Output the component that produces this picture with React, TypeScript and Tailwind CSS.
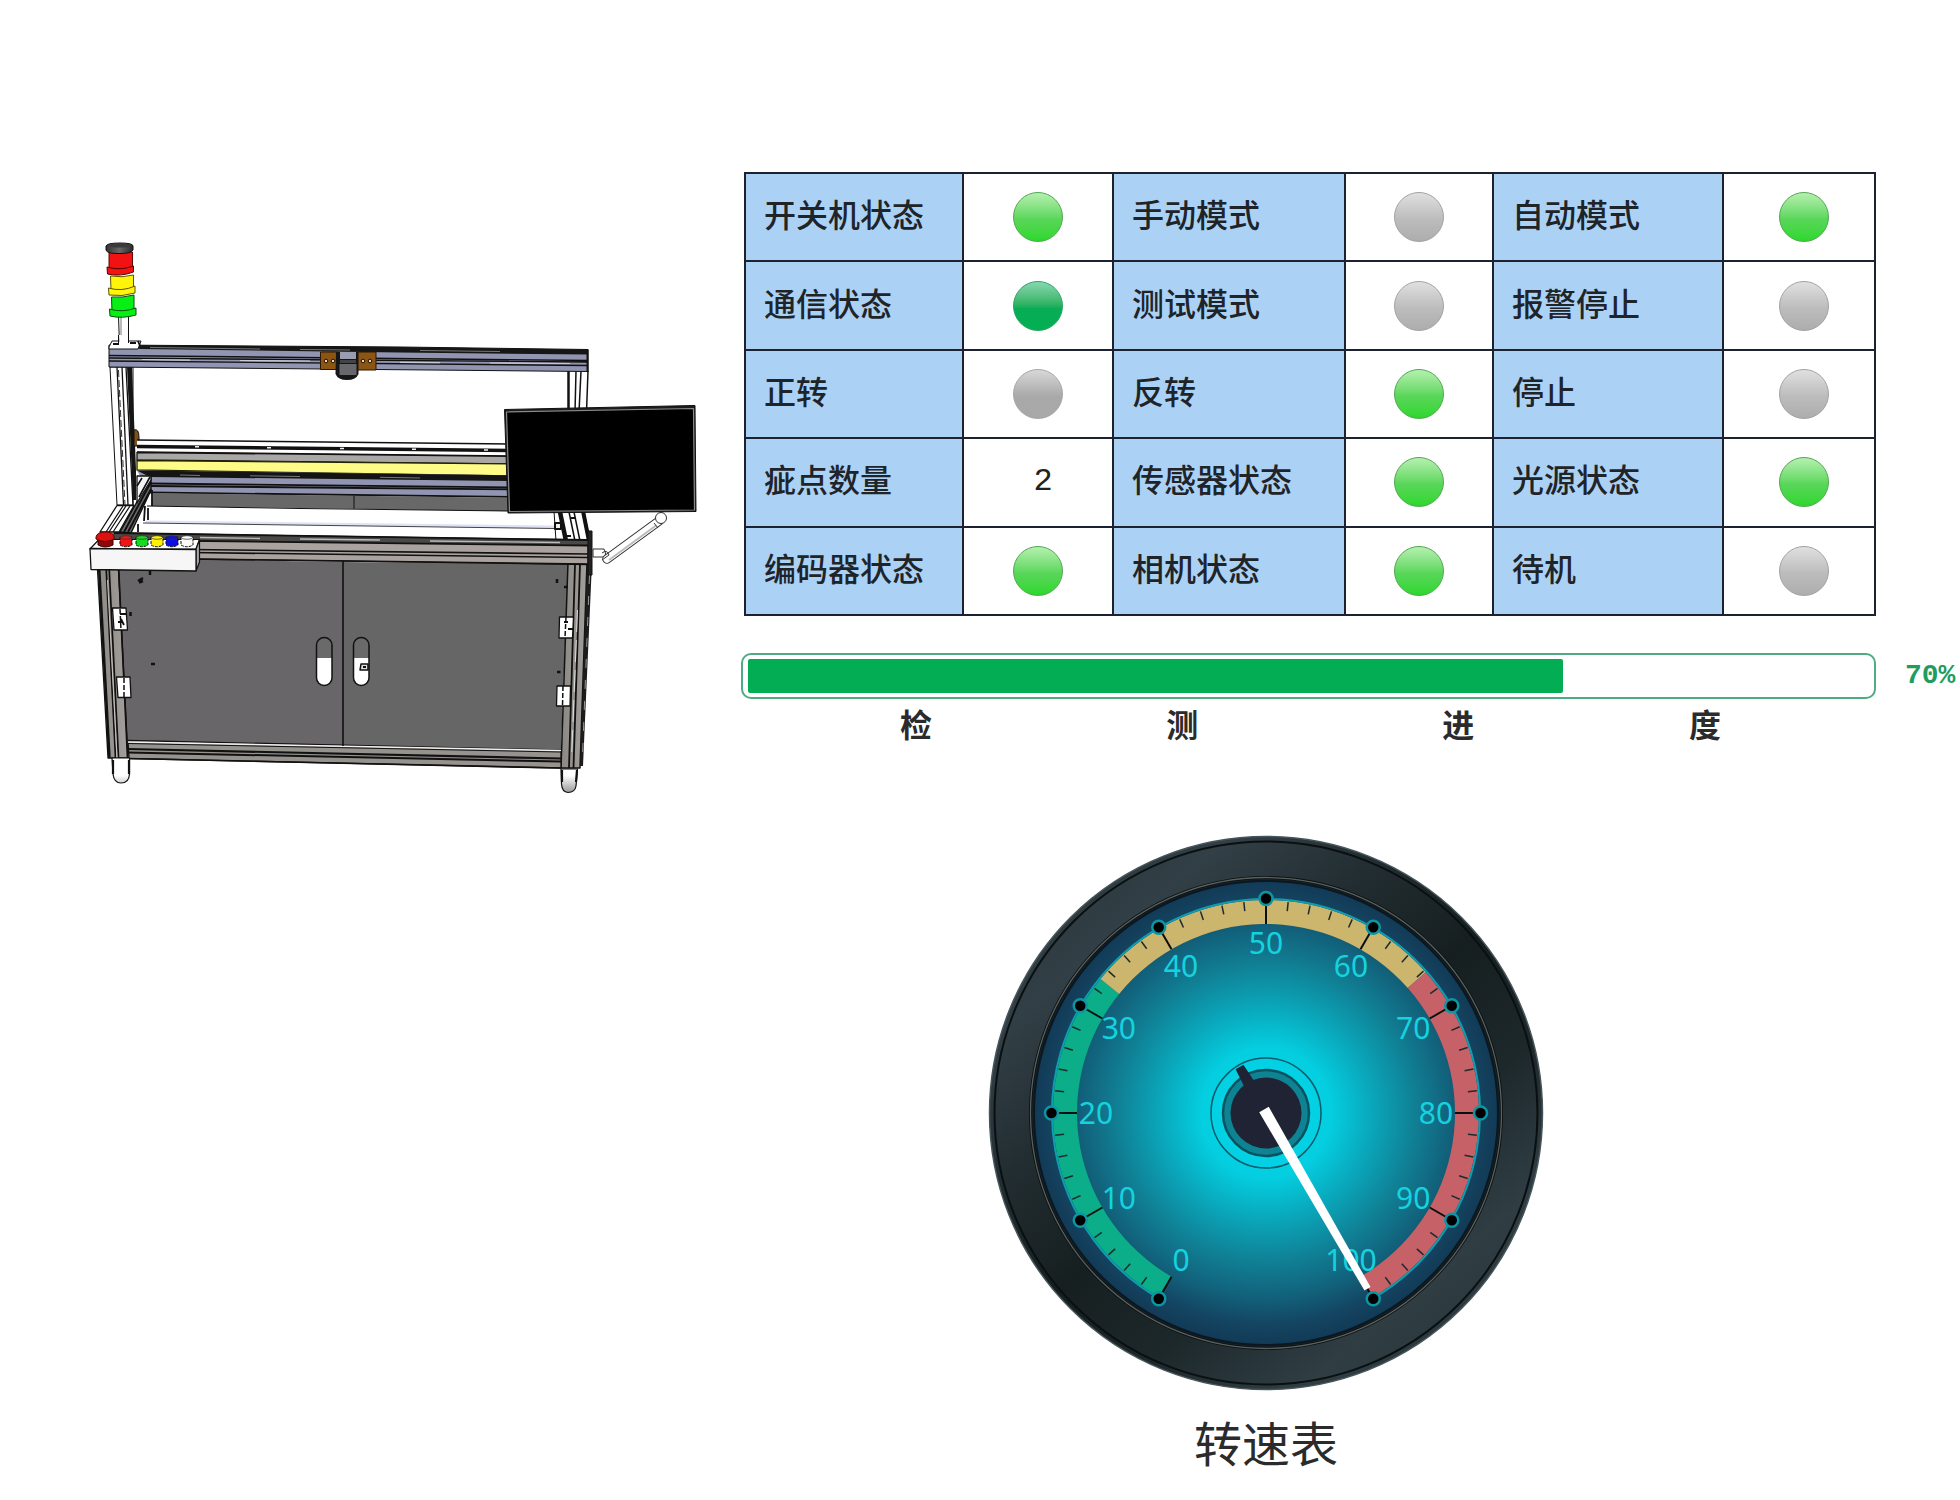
import React from 'react';

type Cell = { label: string; light?: Tone; value?: string };
type Tone = 'on' | 'link' | 'off' | 'idle';

const rows: Cell[][] = [
  [
    { label: '开关机状态', light: 'on' },
    { label: '手动模式', light: 'off' },
    { label: '自动模式', light: 'on' },
  ],
  [
    { label: '通信状态', light: 'link' },
    { label: '测试模式', light: 'off' },
    { label: '报警停止', light: 'off' },
  ],
  [
    { label: '正转', light: 'idle' },
    { label: '反转', light: 'on' },
    { label: '停止', light: 'off' },
  ],
  [
    { label: '疵点数量', value: '2' },
    { label: '传感器状态', light: 'on' },
    { label: '光源状态', light: 'on' },
  ],
  [
    { label: '编码器状态', light: 'on' },
    { label: '相机状态', light: 'on' },
    { label: '待机', light: 'off' },
  ],
];

const tones: Record<Tone, string> = {
  on: 'border-[#55a855] bg-linear-to-b from-[#b4f0b0] via-[#58d658] via-55% to-[#2ad82a]',
  link: 'border-[#2fa56a] bg-linear-to-b from-[#86d8b0] via-[#08ac54] via-55% to-[#00b052]',
  off: 'border-[#a4a4a4] bg-linear-to-b from-[#e0e0e0] via-[#bcbcbc] via-55% to-[#adadad]',
  idle: 'border-[#a8a8a8] bg-linear-to-b from-[#d8d8d8] via-[#a9a9a9] via-55% to-[#a8a8a8]',
};

function Light({ tone }: { tone: Tone }) {
  return (
    <span
      role="img"
      aria-label={tone === 'on' || tone === 'link' ? '开' : '关'}
      className={`mx-auto block size-[50px] rounded-full border ${tones[tone]}`}
    />
  );
}

function StatusTable() {
  return (
    <table className="h-[444px] w-full table-fixed border-collapse border-2 border-[#1c2230]">
      <colgroup>
        <col className="w-[109px]" />
        <col className="w-[75px]" />
        <col className="w-[116px]" />
        <col className="w-[74px]" />
        <col className="w-[115px]" />
        <col className="w-[76px]" />
      </colgroup>
      <tbody>
        {rows.map((row, i) => (
          <tr key={i}>
            {row.map((c) => (
              <React.Fragment key={c.label}>
                <th
                  scope="row"
                  className="border-2 border-[#1c2230] bg-[#abd2f5] pb-2 pl-[18px] text-left text-[32px] leading-10 font-medium whitespace-nowrap text-[#1f2429]"
                >
                  {c.label}
                </th>
                <td
                  className={`border-2 border-[#1c2230] bg-white text-center font-['Liberation_Mono',monospace] text-[32px] leading-10 text-[#222] last:pl-[10px] ${c.value ? 'pl-[10px]' : ''}`}
                >
                  {c.light ? <Light tone={c.light} /> : c.value}
                </td>
              </React.Fragment>
            ))}
          </tr>
        ))}
      </tbody>
    </table>
  );
}

function Progress() {
  return (
    <div className="flex">
      <div className="flex-1">
        <div
          role="progressbar"
          aria-label="检测进度"
          aria-valuenow={70}
          aria-valuemin={0}
          aria-valuemax={100}
          className="h-[46px] rounded-[10px] border-2 border-[#4fab82] bg-white px-[5px] py-[4px]"
        >
          <div className="h-full w-[72.7%] rounded-[2px] bg-[#02ad53]" />
        </div>
        <div className="mt-1 flex pl-[14%] text-[32px] leading-10 font-bold text-[#2b2b2b]">
          <span>检</span>
          <span className="ml-[24%]">测</span>
          <span className="ml-[25%]">进</span>
          <span className="ml-[22%]">度</span>
        </div>
      </div>
      <span className="ml-[29px] w-[55px] font-['Liberation_Mono',monospace] text-[28px] leading-[46px] font-bold text-[#1d9d60]">
        70%
      </span>
    </div>
  );
}

const polar = (v: number, r: number): [number, number] => {
  const a = ((210 + 3 * v) * Math.PI) / 180;
  return [r * Math.sin(a), -r * Math.cos(a)];
};

function band(from: number, to: number, r1: number, r2: number) {
  const [a, b] = polar(from, r1);
  const [c, d] = polar(to, r1);
  const [e, f] = polar(to, r2);
  const [g, h] = polar(from, r2);
  const large = (to - from) * 3 > 180 ? 1 : 0;
  return `M${a} ${b}A${r1} ${r1} 0 ${large} 1 ${c} ${d}L${e} ${f}A${r2} ${r2} 0 ${large} 0 ${g} ${h}Z`;
}

function Gauge() {
  const majors = Array.from({ length: 11 }, (_, i) => i * 10);
  const minors = Array.from({ length: 51 }, (_, i) => i * 2).filter((v) => v % 10);
  return (
    <svg viewBox="-278 -278 556 556" className="block w-full" role="img" aria-label="转速表 100">
      <defs>
        <linearGradient id="bezel" x1="0.12" y1="0.05" x2="0.88" y2="0.95">
          <stop offset="0" stopColor="#2a363b" />
          <stop offset="0.14" stopColor="#323f46" />
          <stop offset="0.32" stopColor="#222d31" />
          <stop offset="0.5" stopColor="#161f20" />
          <stop offset="0.68" stopColor="#1d282b" />
          <stop offset="0.86" stopColor="#303e44" />
          <stop offset="1" stopColor="#273338" />
        </linearGradient>
        <radialGradient id="face">
          <stop offset="0" stopColor="#00dcee" />
          <stop offset="0.28" stopColor="#04cee0" />
          <stop offset="0.46" stopColor="#0aa6ba" />
          <stop offset="0.64" stopColor="#108095" />
          <stop offset="0.8" stopColor="#12607a" />
          <stop offset="0.91" stopColor="#144562" />
          <stop offset="1" stopColor="#123a56" />
        </radialGradient>
      </defs>
      <circle r="276.500" fill="url(#bezel)" stroke="#46555a" strokeWidth="1.500" />
      <circle r="271.500" fill="none" stroke="#0a1011" strokeWidth="2" />
      <circle r="235.500" fill="#182124" stroke="#0b1112" strokeWidth="3" />
      <circle r="235.500" fill="none" stroke="#59605f" strokeWidth="1.300" />
      <circle r="232" fill="url(#face)" stroke="#0a1822" strokeWidth="2" />
      <path d={band(0, 33, 213, 189)} fill="#0bae88" />
      <path d={band(33, 66.2, 213, 189)} fill="#ccb56c" />
      <path d={band(66.2, 100, 213, 189)} fill="#c66168" />
      <path d={`M${polar(0, 214)}A214 214 0 1 1 ${polar(100, 214)}`} fill="none" stroke="#0f9db0" strokeWidth="2" />
      {minors.map((v) => {
        const [a, b] = polar(v, 212);
        const [c, d] = polar(v, 203);
        return <line key={v} x1={a} y1={b} x2={c} y2={d} stroke="#1c2c2c" strokeWidth="1.500" />;
      })}
      {majors.map((v) => {
        const [a, b] = polar(v, 214.5);
        const [c, d] = polar(v, 189);
        const [x, y] = polar(v, 170);
        return (
          <g key={v}>
            <line x1={a} y1={b} x2={c} y2={d} stroke="#0a0f10" strokeWidth="2" />
            <circle cx={a} cy={b} r="6.500" fill="#000" stroke="#0e95a2" strokeWidth="2.500" />
            <text
              x={x}
              y={y + 11}
              textAnchor="middle"
              fontFamily="'Noto Sans', sans-serif"
              fontSize="30"
              fill="#14d3df"
            >
              {v}
            </text>
          </g>
        );
      })}
      <circle r="55" fill="none" stroke="#075b6c" strokeWidth="1.500" />
      <circle r="43" fill="#0d8393" stroke="#0a5260" strokeWidth="2.500" />
      <circle r="35.500" fill="#1f2334" />
      <g transform="rotate(150)">
        <path d="M-6.500 20L-4.500 53H4.500L6.500 20Z" fill="#1f2334" />
        <path d="M-5.500 4H5.500L3.500 -203H-3.500Z" fill="#fff" />
      </g>
    </svg>
  );
}

function Machine() {
  const ink = '#111';
  const buttons: [number, string][] = [
    [120, '#f01616'],
    [136, '#14dd1f'],
    [151, '#fff200'],
    [166, '#0d10e0'],
    [181, '#fafafa'],
  ];
  return (
    <svg viewBox="0 172 741 630" className="block w-full" role="img" aria-label="检测设备" strokeLinejoin="round">
      <defs>
        <linearGradient id="metal" x1="0" x2="1">
          <stop offset="0" stopColor="#8b8883" />
          <stop offset="1" stopColor="#a39f9c" />
        </linearGradient>
        <linearGradient id="caster" x1="0" y1="0" x2="0" y2="1">
          <stop offset="0.5" stopColor="#fff" />
          <stop offset="1" stopColor="#999" />
        </linearGradient>
        <linearGradient id="cap" x1="0" x2="1">
          <stop offset="0" stopColor="#333" />
          <stop offset="0.5" stopColor="#666" />
          <stop offset="1" stopColor="#2b2b2b" />
        </linearGradient>
      </defs>

      {/* signal tower */}
      <path d="M118.500 316H128.500V345H119.500Z" fill="#fff" stroke={ink} />
      <path d="M121 317V343" stroke="#bbb" strokeWidth="2" />
      <path d="M109 252H132.500V270H109Z" fill="#f31111" stroke="#5a0808" />
      <path d="M107 267Q120 271 133.500 266V272Q120 277 107.500 274Z" fill="#f31111" stroke="#4a0606" />
      <path d="M110.500 276Q122 278 133.500 275V290H111Z" fill="#fff40a" stroke="#5c5600" />
      <path d="M108.500 288Q122 292 135 286V293Q122 297 109 295Z" fill="#fff40a" stroke="#5c5600" />
      <path d="M111.500 297Q122 298 134 295V312H112Z" fill="#06f016" stroke="#06500a" />
      <path d="M109.500 309Q122 313 136 308V315Q122 319 110 316Z" fill="#06f016" stroke="#06500a" />
      <path d="M106 246Q107 243 120 243Q133 243 133 246V250Q131 253.500 120 253.500Q107 254 106 250Z" fill="url(#cap)" stroke={ink} />
      <ellipse cx="119.500" cy="245.500" rx="12" ry="2" fill="#3a3a3a" />

      {/* rear posts */}
      <path d="M110 367H133V505H117Z" fill="#fff" stroke={ink} />
      <path d="M117 367L123.500 505M122 367L128 505M126 367L133 505" stroke={ink} strokeWidth="1.300" />
      <path d="M118.500 370L125 505" stroke="#333" strokeDasharray="7 3" />
      <path d="M127 367H132L136 470V500H133Z" fill="#151515" />
      <path d="M134 430Q139 428 139 438V446H134Z" fill="#80501a" stroke={ink} />
      <path d="M568 371H587V412H568Z" fill="#fff" />
      <path d="M568.500 371V412" stroke={ink} strokeWidth="2.500" />
      <path d="M576 371L575 412M581 371L579 412M588 371L586.500 412" stroke={ink} strokeWidth="1.500" />

      {/* top beam */}
      <path d="M109 345L400 347L588 349.500V371.500L109 367Z" fill="#9295b1" stroke={ink} />
      <path d="M120 345L400 347L588 349.500V354.500L400 352.500L140 349Z" fill="#161616" />
      <path d="M150 347.500L260 349M300 349.500L350 350M420 350.500L500 351.500" stroke="#777" />
      <path d="M109 355.500L588 360.500M109 358L588 362M109 361L588 365.500" stroke={ink} strokeWidth="1.400" />
      <path d="M142 359.500L190 360.200M240 360.500L310 361M400 362.300L440 362.700M490 363L570 363.500" stroke="#c8cad8" strokeWidth="1.200" />
      <path d="M587.500 349.500V372" stroke={ink} strokeWidth="2" />
      <path d="M109 347L112 341H141L138 349H109Z" fill="#fff" stroke={ink} />
      <path d="M113 344H119M130 343H136M138 341L140 346" stroke={ink} strokeWidth="1.800" />
      <path d="M119 335H128.500V344H119.500Z" fill="#fff" />
      <path d="M118.500 335V343M128.500 335V343" stroke={ink} />

      {/* camera */}
      <path d="M320.500 352H338V369.500H320.500ZM357 352H376V370H357Z" fill="#8d5512" stroke="#2a1804" />
      {[326, 333, 363, 370].map((x) => (
        <circle key={x} cx={x} cy="361" r="1.800" fill="#e5d8c4" stroke="#201300" />
      ))}
      <path d="M336 352H358.500V374Q356 380 347 380Q338 380 335.500 374Z" fill="#161616" />
      <path d="M340 352H356V359H340Z" fill="#9a9cb2" />
      <path d="M340 360H356V363H340Z" fill="#444" />
      <path d="M339.500 364H356.500V375H339.500Z" fill="#68686c" />

      {/* cross bars and lamp */}
      <path d="M137 440L520 444V457L137 452Z" fill="#fff" />
      <path d="M137 440L520 444M137 452L520 456" stroke={ink} strokeWidth="1.500" />
      <path d="M137 446.500L520 450.500" stroke={ink} strokeWidth="3.500" />
      <path d="M195 446.800H199M267 447.800H271M340 448.500H344M412 449.300H416M484 450H488" stroke="#eee" strokeWidth="1.500" />
      <path d="M137 452.500L520 456.500V464L137 460Z" fill="#aaa7a7" stroke={ink} strokeWidth="1.300" />
      <path d="M137 460.500L520 464V476L137 470Z" fill="#fffb87" stroke="#232300" strokeWidth="1.300" />
      <path d="M137 470.500L520 475.500V498L150 493Z" fill="#9295b1" />
      <path d="M137 470.500L520 475.500V481L150 477Z" fill="#141414" />
      <path d="M180 475L200 475.500M250 475.800L300 476.500M380 477.300L420 478" stroke="#777" />
      <path d="M150 483.500L520 487.500M150 486L520 489.500M150 492.500L520 497" stroke={ink} strokeWidth="1.800" />
      <path d="M153 493L520 498V512L151 507Z" fill="#686868" />
      <path d="M354 496V509" stroke={ink} />

      {/* conveyor */}
      <path d="M145 506L300 508L555 512V538L140 532Z" fill="#fff" />
      <path d="M147 506L300 508.500L510 511" fill="none" stroke={ink} />
      <path d="M146 520.500L555 525.500V528.500L146 523Z" fill="#dfe2f5" />
      <path d="M143 523L330 525.500L555 528.500" fill="none" stroke="#444" />

      {/* left rails */}
      <path d="M100 532L117 505.500H134L119 532Z" fill="#fff" stroke={ink} strokeWidth="1.300" />
      <path d="M106 532L123 506M109 532L126 506M113 532L130 506" stroke={ink} strokeWidth="1.200" />
      <path d="M120 532L151 477V490L131 533Z" fill="#6c6c6c" stroke={ink} strokeWidth="1.400" />
      <path d="M124 532L151 482M128 532L151 489" stroke={ink} strokeWidth="2" />
      <path d="M137 476H151V480L137 503Z" fill="#f4f4f4" stroke={ink} strokeWidth="1.300" />
      <path d="M139 497L150 477M142 478L137 486" stroke={ink} strokeWidth="1.600" />
      <path d="M152 490V506M145 506L144 521M148 508V520M138 524V532" stroke={ink} strokeWidth="1.800" />

      {/* right rails */}
      <path d="M554 511H584L590 541H556Z" fill="#fff" stroke={ink} />
      <path d="M560 512L566 541" stroke={ink} strokeWidth="4.500" />
      <path d="M569 512L575 541M574 512L580 541" stroke={ink} strokeWidth="1.500" />
      <path d="M583 511L589 541" stroke={ink} strokeWidth="4" />
      <path d="M555 523H561V529H555ZM571 518H575M566 536H571" fill="#eee" stroke={ink} strokeWidth="2" />

      {/* cabinet body */}
      <path d="M118 558L343 562V747L127 741Z" fill="#686668" />
      <path d="M343 562L568 564L561 750L343 747Z" fill="#666" />
      <path d="M97 560H118L128 758H108Z" fill="url(#metal)" stroke={ink} strokeWidth="1.300" />
      <path d="M99 565L109.500 758" stroke={ink} strokeWidth="2.500" />
      <path d="M106 565L115.500 758M109 565L118.500 758M118.500 565L127.500 758" stroke={ink} strokeWidth="1.700" />
      <path d="M107.500 580L117 758" stroke="#c9c5c0" />
      <path d="M568 562H587L580 768H561Z" fill="url(#metal)" stroke={ink} strokeWidth="1.500" />
      <path d="M587 562H592L583 766H580Z" fill="#1c1c1c" />
      <path d="M589.500 575L582.500 755" stroke="#999" strokeDasharray="9 12" />
      <path d="M575 564L569 768M580 564L573.500 768" stroke={ink} strokeWidth="1.800" />
      <path d="M577.500 610L571.500 760" stroke="#ddd" strokeDasharray="22 8" />

      {/* bottom beam */}
      <path d="M128 740.500L561 750V768L129 758.500Z" fill="#96928e" stroke={ink} strokeWidth="1.300" />
      <path d="M128 742L561 750.500" stroke="#f0f0f0" strokeWidth="1.600" />
      <path d="M128 743.500L561 752" stroke={ink} />
      <path d="M128 749L561 758.500" stroke={ink} strokeWidth="2.200" />
      <path d="M128 752.500L561 761.500" stroke={ink} strokeWidth="2" />
      <path d="M128 758.500L561 768" stroke={ink} strokeWidth="1.600" />
      <path d="M343 560V746" stroke={ink} strokeWidth="1.600" />

      {/* handles */}
      {[316.5, 353.5].map((x) => (
        <g key={x}>
          <rect x={x} y="637.500" width="15.500" height="48" rx="7.750" fill="#fff" />
          <path d={`M${x} 658V645.500A7.750 7.750 0 0 1 ${x + 15.5} 645.500V658Z`} fill="#6a6a6a" />
          <rect x={x} y="637.500" width="15.500" height="48" rx="7.750" fill="none" stroke={ink} strokeWidth="1.500" />
        </g>
      ))}
      <path d="M361 664H368V670H360Z" fill="#ddd" stroke={ink} strokeWidth="1.500" />
      <path d="M363 667H366" stroke={ink} strokeWidth="2" />

      {/* hinges and fixings */}
      <path d="M112.500 608H126L127.500 630H114Z M116.500 677H130L131 697.500H118Z M559.500 617H573.500L572.500 638H559Z M557 686H570.500L570 706H556.500Z" fill="#fff" stroke={ink} strokeWidth="1.300" />
      <path d="M120 609L121 630M124 678V697M566 617L565 638M563 686L562.500 706" stroke={ink} strokeDasharray="5 2" strokeWidth="1.500" />
      <path d="M118 622H123M121 619L124 625M120 614H126M564 622H568M568 629H573" stroke={ink} strokeWidth="1.800" />
      <path d="M138 581L143 578M139 582.500L143 581M150 570V575M130.500 612V616M151 664H155M557 579V583M564 587H568M557 672H560.500" stroke={ink} strokeWidth="2.500" />

      {/* casters */}
      <path d="M112 758H129.500V774Q129 783 121 783Q114 783 113 774Z M561 769H577.500L576 786Q575 792.500 568 792.500Q562 792 561.500 784Z" fill="url(#caster)" stroke={ink} strokeWidth="1.200" />
      <path d="M113 760V774M129 760V774M562 770V782M577 770L576 782" stroke={ink} strokeWidth="2.200" />

      {/* front beam */}
      <path d="M114 533L588 540V564.500L114 558Z" fill="#aaa29e" stroke={ink} strokeWidth="1.300" />
      <path d="M114 533L588 540V545L114 540Z" fill="#4a4947" />
      <path d="M114 533L588 540M114 540L588 545.500" stroke={ink} strokeWidth="1.800" />
      <path d="M200 537.500L260 538.500M300 539L380 540M430 541L560 542.500" stroke="#bbb" strokeWidth="1.300" />
      <path d="M190 549.500L588 554M190 552.500L588 557.500M190 559L588 564" stroke={ink} strokeWidth="1.600" />
      <path d="M588 531H592V575H588Z" fill="#222" stroke={ink} />

      {/* control box */}
      <path d="M90 549L99 539.500H199.500L196 549Z" fill="#fff" stroke={ink} strokeWidth="1.200" />
      <path d="M196 549L199.500 540V562L196 571Z" fill="#aaa" stroke={ink} strokeWidth="1.200" />
      <path d="M90 548.500L196 549.500V571L91 569.500Z" fill="#f6f6f6" stroke={ink} strokeWidth="1.300" />
      <path d="M98 540V545Q105 549 113 545V539Z" fill="#8f0707" stroke="#3c0303" />
      <path d="M96 537Q97 532 105 532Q113 532 114 536V539Q105 544 96 539Z" fill="#dd1010" stroke="#5a0505" />
      {buttons.map(([x, c]) => (
        <g key={x}>
          <path d={`M${x} 537V545Q${x + 6} 548.500 ${x + 12} 545V537Z`} fill={c} stroke={ink} strokeDasharray="3 1" />
          <ellipse cx={x + 6} cy="537.500" rx="5.500" ry="1.800" fill={c} stroke="#333" strokeWidth="0.700" />
        </g>
      ))}

      {/* monitor and arm */}
      <path d="M593 549H604Q607 555 604 557H593Z" fill="#fff" stroke="#333" />
      <path d="M607 559L659 521" stroke="#333" strokeWidth="9.500" strokeLinecap="round" />
      <path d="M607 559L659 521" stroke="#fff" strokeWidth="7.500" strokeLinecap="round" />
      <path d="M609 560L656 525.500" stroke="#bbb" strokeWidth="1.800" />
      <path d="M602 553Q607 549 609 555L602 560M654 523L658 528" stroke="#333" fill="none" />
      <circle cx="661" cy="518" r="5.500" fill="#fff" stroke="#333" />
      <path d="M504.500 409.500L695 405.500L696 511.500L508 513Z" fill="#1c1c1c" stroke={ink} />
      <path d="M506.500 412L693.500 408.500L694.500 510L509.500 511.500Z" fill="#000" stroke="#8a8a8a" strokeWidth="1.200" />
    </svg>
  );
}

export default function App() {
  return (
    <main className="grid min-h-screen grid-cols-[741fr_1219fr] items-start bg-white pt-[172px] font-['Noto_Sans_CJK_SC',sans-serif]">
      <section aria-label="设备" className="min-w-0">
        <Machine />
      </section>
      <section aria-label="运行状态" className="min-w-0">
        <div className="mr-[84px] ml-[3px]">
          <StatusTable />
        </div>
        <div className="mt-[37px]">
          <Progress />
        </div>
        <figure className="mt-[92px] ml-[247px] w-[556px]">
          <Gauge />
          <figcaption className="mt-[22px] text-center text-[48px] leading-[56px] font-normal text-[#2b2b2b]">
            转速表
          </figcaption>
        </figure>
      </section>
    </main>
  );
}
